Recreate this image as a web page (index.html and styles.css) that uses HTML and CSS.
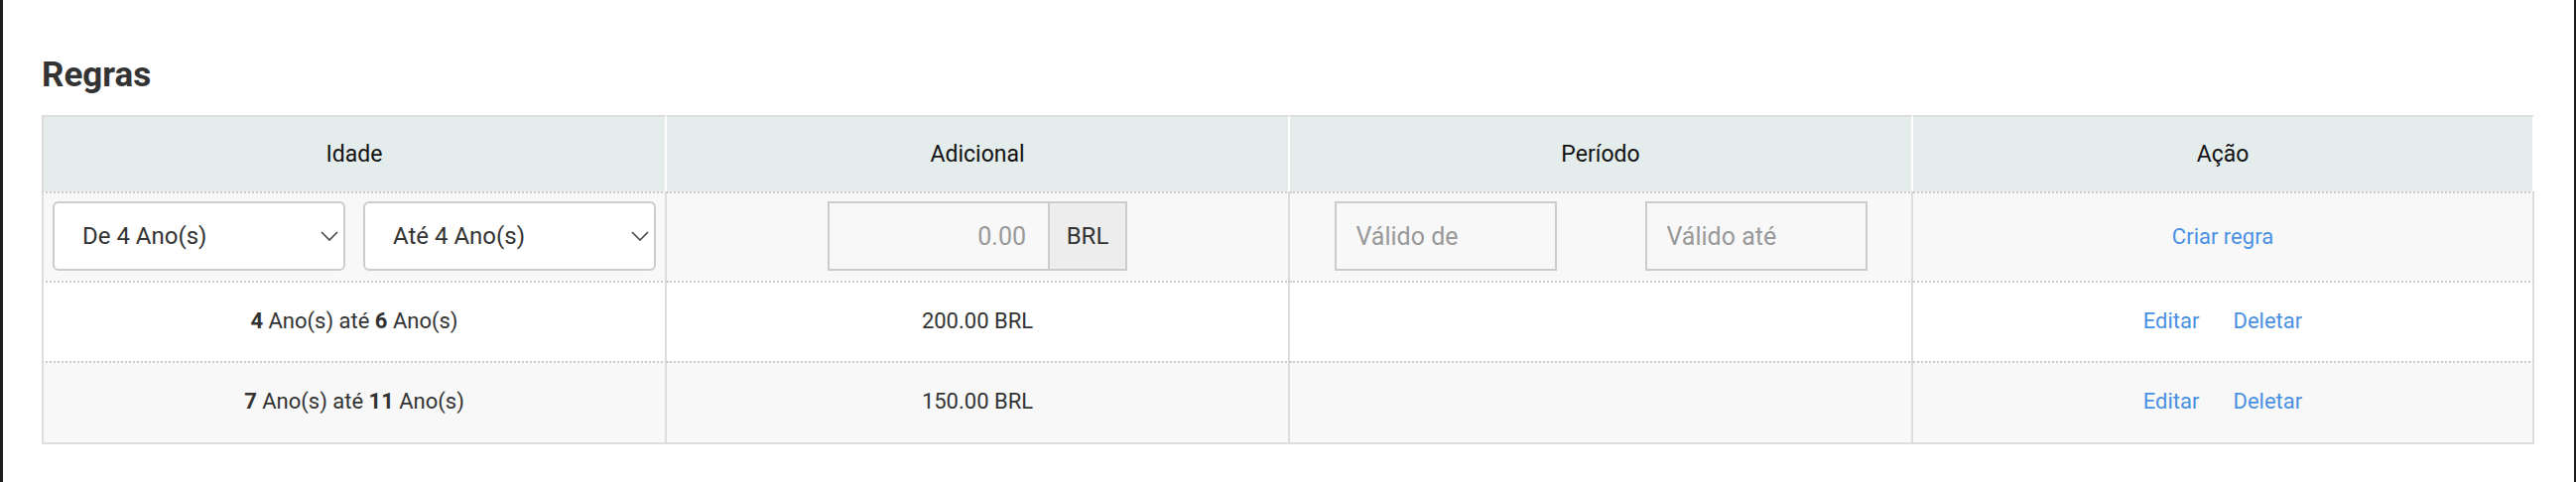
FILE: index.html
```html
<!DOCTYPE html>
<html lang="pt-BR">
<head>
    <meta charset="UTF-8">
    <meta name="viewport" content="width=device-width, initial-scale=1.0">
    <title>Regras</title>
    <link rel="stylesheet" href="styles.css">
</head>
<body>
    <div class="frame">
        <h2 class="title">Regras</h2>
        <table class="rules">
            <colgroup>
                <col class="col-age">
                <col class="col-extra">
                <col class="col-period">
                <col class="col-action">
            </colgroup>
            <thead>
                <tr>
                    <th>Idade</th>
                    <th>Adicional</th>
                    <th>Período</th>
                    <th>Ação</th>
                </tr>
            </thead>
            <tbody>
                <tr class="form-row">
                    <td>
                        <div class="age-range">
                            <div class="select-wrap">
                                <select>
                                    <option selected>De 4 Ano(s)</option>
                                    <option>De 5 Ano(s)</option>
                                </select>
                                <svg class="chevron" viewBox="0 0 18 10"><path d="M1 1l8 8 8-8"/></svg>
                            </div>
                            <div class="select-wrap">
                                <select>
                                    <option selected>Até 4 Ano(s)</option>
                                    <option>Até 5 Ano(s)</option>
                                </select>
                                <svg class="chevron" viewBox="0 0 18 10"><path d="M1 1l8 8 8-8"/></svg>
                            </div>
                        </div>
                    </td>
                    <td>
                        <div class="input-group">
                            <input type="text" class="amount" placeholder="0.00">
                            <span class="addon">BRL</span>
                        </div>
                    </td>
                    <td>
                        <div class="period">
                            <input type="text" class="date" placeholder="Válido de">
                            <input type="text" class="date" placeholder="Válido até">
                        </div>
                    </td>
                    <td><a href="#" class="link">Criar regra</a></td>
                </tr>
                <tr>
                    <td><b>4</b> Ano(s) até <b>6</b> Ano(s)</td>
                    <td>200.00 BRL</td>
                    <td></td>
                    <td><div class="actions"><a href="#" class="link">Editar</a><a href="#" class="link">Deletar</a></div></td>
                </tr>
                <tr>
                    <td><b>7</b> Ano(s) até <b>11</b> Ano(s)</td>
                    <td>150.00 BRL</td>
                    <td></td>
                    <td><div class="actions"><a href="#" class="link">Editar</a><a href="#" class="link">Deletar</a></div></td>
                </tr>
            </tbody>
        </table>
    </div>
</body>
</html>
```

FILE: styles.css
```css
body {
    margin: 0;
    font-family: Roboto, "Liberation Sans", sans-serif;
    color: #333;
    background: #fff;
}
.frame {
    height: 486px;
    box-sizing: border-box;
    border-left: 3px solid #1c1c1c;
    border-right: 2px solid #1c1c1c;
    padding: 56px 40px 0 39px;
}
.title {
    margin: 0 0 20px;
    font-size: 35px;
    line-height: 40px;
    font-weight: bold;
    color: #333;
}
.rules {
    width: 2512px;
    border-collapse: separate;
    border-spacing: 0;
    table-layout: fixed;
}
.col-age { width: 630px; }
.col-extra { width: 628px; }
.col-period { width: 628px; }
.col-action { width: 626px; }
.rules th {
    padding: 0;
    line-height: 75px;
    background-color: #e4edec;
    border-top: 2px solid #ddd;
    border-right: 2px solid #fff;
    font-size: 23px;
    font-weight: normal;
    color: #111;
    text-align: center;
}
.rules th:first-child,
.rules td:first-child {
    border-left: 2px solid #ddd;
}
.rules td {
    padding: 26px 10px 27px;
    line-height: 26px;
    font-size: 22px;
    text-align: center;
    vertical-align: middle;
    border-top: 2px dotted #ccc;
    border-right: 2px solid #ddd;
}
.rules tbody tr:nth-child(odd) td {
    background-color: #f8f8f8;
}
.rules tbody tr:last-child td {
    padding-bottom: 28px;
    border-bottom: 2px solid #ddd;
}
.rules .form-row td {
    padding: 8px 0 10px;
    line-height: normal;
}
.rules .form-row td:first-child {
    padding: 7px 9px 10px;
}
.age-range {
    display: flex;
    gap: 18px;
}
.select-wrap {
    position: relative;
    flex: 1;
}
.select-wrap select {
    -webkit-appearance: none;
    appearance: none;
    width: 100%;
    height: 70px;
    margin: 0;
    padding: 0 40px 0 28px;
    border: 2px solid #ccc;
    border-radius: 6px;
    background: #fff;
    font-family: inherit;
    font-size: 24px;
    color: #333;
}
.chevron {
    position: absolute;
    right: 7px;
    top: 30px;
    width: 18px;
    height: 10px;
    fill: none;
    stroke: #444;
    stroke-width: 1.6;
    pointer-events: none;
}
.input-group {
    display: inline-flex;
    width: 302px;
    height: 70px;
    box-sizing: border-box;
    border: 2px solid #ccc;
    vertical-align: middle;
}
.amount {
    width: 222px;
    box-sizing: border-box;
    margin: 0;
    border: none;
    border-right: 2px solid #ccc;
    padding: 0 22px 0 10px;
    background: transparent;
    text-align: right;
    font-family: inherit;
    font-size: 25px;
    color: #333;
}
.addon {
    flex: 1;
    display: flex;
    align-items: center;
    justify-content: center;
    background-color: #ededed;
    font-size: 24px;
    color: #333;
}
.period {
    display: grid;
    grid-template-columns: 1fr 1fr;
    justify-items: center;
}
.date {
    width: 224px;
    height: 70px;
    box-sizing: border-box;
    margin: 0;
    border: 2px solid #ccc;
    padding: 0 10px 0 20px;
    background: transparent;
    font-family: inherit;
    font-size: 25px;
    color: #333;
}
input::placeholder {
    color: #999;
}
.link {
    color: #4a90e2;
    text-decoration: none;
}
.actions {
    display: flex;
    justify-content: center;
    gap: 34px;
}
```
